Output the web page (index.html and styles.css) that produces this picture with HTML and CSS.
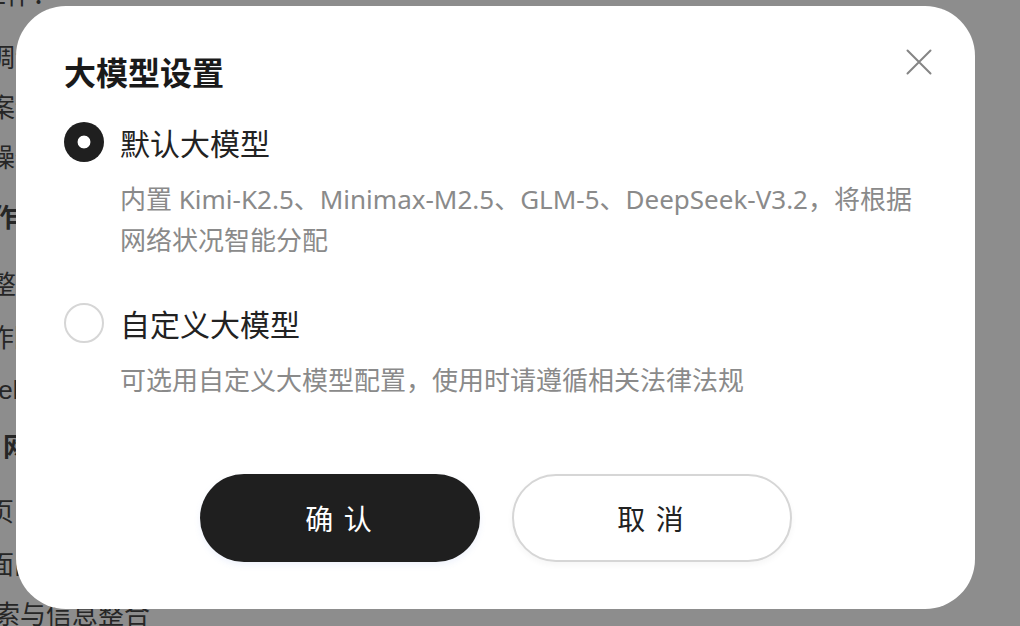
FILE: index.html
```html
<!DOCTYPE html>
<html lang="zh-CN">
<head>
<meta charset="utf-8">
<title>大模型设置</title>
<link rel="stylesheet" href="styles.css">
</head>
<body>
<div class="page">
  <ul class="bg-list">
    <li class="bg-item">工作：</li>
    <li class="bg-item">协调设计</li>
    <li class="bg-item">方案设计</li>
    <li class="bg-item">操作</li>
    <li class="bg-item bg-head">工作</li>
    <li class="bg-item">整理</li>
    <li class="bg-item">作图</li>
    <li class="bg-item bg-latin">Excel表</li>
    <li class="bg-item bg-head">网络</li>
    <li class="bg-item">页，</li>
    <li class="bg-item">面向</li>
    <li class="bg-item">搜索与信息整合</li>
  </ul>
</div>

<div class="overlay">
  <div class="modal" role="dialog" aria-labelledby="modal-title">
    <div class="modal-header">
      <h2 id="modal-title" class="modal-title">大模型设置</h2>
      <button class="close-btn" aria-label="关闭">
        <svg width="26" height="26" viewBox="0 0 26 26" fill="none">
          <path d="M1.5 1.5 L24.5 24.5 M24.5 1.5 L1.5 24.5" stroke="#858585" stroke-width="2" stroke-linecap="round"/>
        </svg>
      </button>
    </div>

    <div class="options">
      <div class="option">
        <div class="option-row">
          <span class="radio radio-checked"></span>
          <span class="option-label">默认大模型</span>
        </div>
        <p class="option-desc">内置 Kimi-K2.5、Minimax-M2.5、GLM-5、DeepSeek-V3.2，将根据网络状况智能分配</p>
      </div>
      <div class="option option-second">
        <div class="option-row">
          <span class="radio"></span>
          <span class="option-label">自定义大模型</span>
        </div>
        <p class="option-desc">可选用自定义大模型配置，使用时请遵循相关法律法规</p>
      </div>
    </div>

    <div class="actions">
      <button class="btn btn-primary">确 认</button>
      <button class="btn btn-secondary">取 消</button>
    </div>
  </div>
</div>
</body>
</html>
```

FILE: styles.css
```css
* {
  box-sizing: border-box;
}

html, body {
  margin: 0;
  padding: 0;
}

body {
  width: 1020px;
  height: 626px;
  overflow: hidden;
  background: #8d8d8d;
  font-family: "Noto Sans", "Noto Sans CJK SC", sans-serif;
  position: relative;
}

.page {
  width: 100%;
  height: 100%;
  overflow: hidden;
}

.bg-list {
  list-style: none;
  margin: 0;
  padding: 0;
  display: flex;
  flex-direction: column;
  padding-top: 0;
  margin-top: -20px;
}

.bg-item {
  font-family: "Liberation Sans", "Noto Sans CJK SC", sans-serif;
  font-size: 26px;
  line-height: 30px;
  height: 30px;
  color: #262626;
  white-space: nowrap;
}

.bg-head {
  font-weight: 700;
}

.bg-item:nth-child(1)  { margin-left: -20px; }
.bg-item:nth-child(2)  { margin-left: -37px; margin-top: 33px; }
.bg-item:nth-child(3)  { margin-left: -37px; margin-top: 20px; }
.bg-item:nth-child(4)  { margin-left: -11px; margin-top: 20px; }
.bg-item:nth-child(5)  { margin-left: -34px; margin-top: 30px; }
.bg-item:nth-child(6)  { margin-left: -10px; margin-top: 37px; }
.bg-item:nth-child(7)  { margin-left: -12px; margin-top: 23px; }
.bg-item:nth-child(8)  { margin-left: -45px; margin-top: 22px; }
.bg-item:nth-child(9)  { margin-left: 3px;   margin-top: 27px; }
.bg-item:nth-child(10) { margin-left: -12px; margin-top: 35px; }
.bg-item:nth-child(11) { margin-left: -12px; margin-top: 23px; }
.bg-item:nth-child(12) { margin-left: -32px; margin-top: 20px; }

.overlay {
  position: absolute;
  inset: 0;
}

.modal {
  position: absolute;
  left: 16px;
  top: 6px;
  width: 959px;
  height: 603px;
  background: #ffffff;
  border-radius: 50px;
  padding: 45px 43px 47px 48px;
  display: flex;
  flex-direction: column;
}

.modal-header {
  display: flex;
  align-items: center;
  justify-content: space-between;
  height: 40px;
}

.modal-title {
  margin: 0;
  font-family: "Noto Sans CJK SC", sans-serif;
  font-size: 32px;
  line-height: 40px;
  font-weight: 700;
  color: #1a1a1a;
}

.close-btn {
  border: 0;
  background: transparent;
  padding: 0;
  width: 26px;
  height: 26px;
  margin-top: -18px;
  display: flex;
  align-items: center;
  justify-content: center;
}

.options {
  display: flex;
  flex-direction: column;
  margin-top: 31px;
}

.option-second {
  margin-top: 42px;
}

.option-row {
  display: flex;
  align-items: center;
  gap: 16px;
  height: 40px;
}

.radio {
  width: 40px;
  height: 40px;
  border-radius: 50%;
  border: 2px solid #d6d6d6;
  flex: none;
}

.radio-checked {
  border: 0;
  background: radial-gradient(circle, #ffffff 0 6px, #1f1f1f 6.8px);
}

.option-label {
  font-family: "Noto Sans CJK SC", sans-serif;
  font-size: 30px;
  line-height: 40px;
  color: #222222;
}

.option-desc {
  margin: 17px 0 0 56px;
  font-size: 26px;
  line-height: 41px;
  color: #8a8a8a;
}

.actions {
  margin-top: auto;
  display: flex;
  justify-content: center;
  gap: 32px;
  padding-right: 5px;
}

.btn {
  width: 280px;
  height: 88px;
  border-radius: 44px;
  font-family: "Noto Sans CJK SC", sans-serif;
  font-size: 28px;
  letter-spacing: 2px;
  cursor: pointer;
}

.btn-primary {
  background: #1f1f1f;
  color: #ffffff;
  border: 0;
  box-shadow: 0 3px 6px rgba(120, 160, 230, 0.12);
}

.btn-secondary {
  background: #ffffff;
  color: #222222;
  border: 2px solid #d6d6d6;
  box-shadow: 0 3px 6px rgba(0, 0, 0, 0.04);
}
```
